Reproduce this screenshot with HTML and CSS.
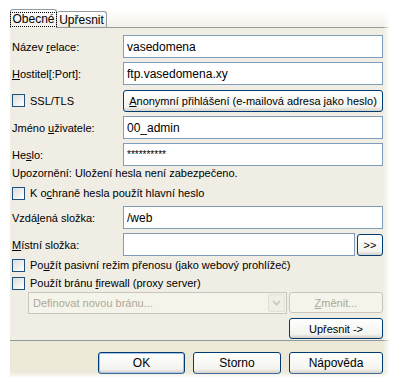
FILE: index.html
```html
<!DOCTYPE html>
<html lang="cs">
<head>
    <meta charset="UTF-8">
    <meta name="viewport" content="width=device-width, initial-scale=1.0">
    <title>Nastavení relace</title>
    <link rel="stylesheet" href="styles.css">
</head>
<body>

<div class="dialog">
    <div class="tabs">
        <div class="tab active"><span class="focus">Obecné</span></div>
        <div class="tab second">Upřesnit</div>
    </div>

    <div class="panel">
        <div class="row first">
            <label class="lbl" for="relace">Název <u>r</u>elace:</label>
            <input class="field" type="text" id="relace" value="vasedomena">
        </div>
        <div class="row">
            <label class="lbl" for="host"><u>H</u>ostitel[:Port]:</label>
            <input class="field" type="text" id="host" value="ftp.vasedomena.xy">
        </div>
        <div class="row">
            <div class="lbl check"><span class="box"></span><span>SSL/TLS</span></div>
            <button class="btn wide"><u>A</u>nonymní přihlášení (e-mailová adresa jako heslo)</button>
        </div>
        <div class="row">
            <label class="lbl" for="user">Jméno <u>u</u>živatele:</label>
            <input class="field" type="text" id="user" value="00_admin">
        </div>
        <div class="row">
            <label class="lbl" for="pass">He<u>s</u>lo:</label>
            <input class="field pass" type="text" id="pass" value="**********">
        </div>
        <div class="note">Upozornění: Uložení hesla není zabezpečeno.</div>
        <div class="check master"><span class="box"></span><span>K o<u>c</u>hraně hesla použít hlavní heslo</span></div>
        <div class="row">
            <label class="lbl" for="remote">Vzdá<u>l</u>ená složka:</label>
            <input class="field" type="text" id="remote" value="/web">
        </div>
        <div class="row">
            <label class="lbl" for="local"><u>M</u>ístní složka:</label>
            <input class="field" type="text" id="local" value="">
            <button class="btn small">&gt;&gt;</button>
        </div>
        <div class="check"><span class="box"></span><span>Po<u>u</u>žít pasivní režim přenosu (jako webový prohlížeč)</span></div>
        <div class="check"><span class="box"></span><span>Použít bránu <u>f</u>irewall (proxy server)</span></div>
        <div class="gateway">
            <div class="combo">
                <span class="combo-text">Definovat novou bránu...</span>
                <span class="combo-arrow">
                    <svg width="9" height="6" viewBox="0 0 9 6"><path d="M1 1 L4.5 4.5 L8 1" fill="none" stroke="#C7C5B8" stroke-width="1.6"/></svg>
                </span>
            </div>
            <button class="btn side" disabled><u>Z</u>měnit...</button>
        </div>
        <div class="more">
            <button class="btn side">Upřesnit -&gt;</button>
        </div>
    </div>

    <div class="footer">
        <button class="btn ok default">OK</button>
        <button class="btn storno">Storno</button>
        <button class="btn help">Nápověda</button>
    </div>
</div>

</body>
</html>
```

FILE: styles.css
```css
body {
    margin: 0;
    padding: 0;
    background-color: white;
    font-family: "Liberation Sans", Arial, sans-serif;
    font-size: 11px;
    color: black;
}
.dialog {
    position: relative;
    width: 380px;
    margin: 9px 0 0 10px;
}
/* fade at the right and bottom edge of the picture */
.dialog::after {
    content: "";
    position: absolute;
    top: 0;
    right: 0;
    bottom: 0;
    width: 7px;
    background: linear-gradient(to right, rgba(255,255,255,0), white);
}
.dialog::before {
    content: "";
    position: absolute;
    left: 0;
    right: 0;
    bottom: 0;
    height: 6px;
    background: linear-gradient(rgba(255,255,255,0), white);
    z-index: 2;
}
.tabs {
    display: flex;
    align-items: flex-end;
    height: 18px;
    background: linear-gradient(white, #F3F1E9);
    font-size: 12px;
}
.tab {
    box-sizing: border-box;
    height: 16px;
    border: 1px solid #919B9C;
    border-bottom: none;
    border-radius: 3px 3px 0 0;
    background: linear-gradient(white, #ECEBE6);
    display: flex;
    align-items: center;
    justify-content: center;
}
.tab.active {
    width: 47px;
    height: 19px;
    margin-bottom: -1px;
    background: linear-gradient(#FCFCFE, #F1EFE7);
    position: relative;
    z-index: 1;
}
.tab.second {
    width: 50px;
    border-left: none;
}
.focus {
    border: 1px dotted black;
    padding: 0 1px;
    line-height: 13px;
}
.panel {
    background: #EFEDE4;
    border-top: 1px solid #919B9C;
    border-bottom: 1px solid #919B9C;
    padding: 7px 7px 1px 2px;
}
.row {
    display: flex;
    align-items: center;
    height: 23px;
    margin-top: 4px;
}
.row.first {
    margin-top: 0;
}
.lbl {
    width: 111px;
    flex: none;
}
.field {
    flex: 1;
    min-width: 0;
    height: 23px;
    box-sizing: border-box;
    margin: 0;
    padding: 0 3px;
    border: 1px solid #7F9DB9;
    background: white;
    font-family: inherit;
    font-size: 12px;
    color: black;
    outline: none;
}
.field.pass {
    font-size: 10px;
}
.check {
    display: flex;
    align-items: center;
    height: 18px;
}
.check.master {
    margin-top: 3px;
}
.box {
    width: 13px;
    height: 13px;
    box-sizing: border-box;
    border: 1px solid #1C5180;
    background: linear-gradient(135deg, #DCDCD7, white);
    margin-right: 5px;
    flex: none;
}
.note {
    height: 15px;
    line-height: 15px;
}
.btn {
    height: 22px;
    box-sizing: border-box;
    margin: 0;
    padding: 0;
    border: 1px solid #003C74;
    border-radius: 3px;
    background: linear-gradient(white, #F3F3EF 80%, #D6D0C5);
    font-family: inherit;
    font-size: 11px;
    color: black;
    white-space: nowrap;
}
.btn.wide {
    flex: 1;
}
.btn.small {
    width: 26px;
    margin-left: 2px;
}
.btn.side {
    width: 94px;
    height: 21px;
}
.btn:disabled {
    border-color: #C9C7BA;
    background: #F5F4EA;
    color: #ACA899;
}
.gateway {
    display: flex;
    height: 22px;
    padding-left: 16px;
}
.combo {
    width: 259px;
    box-sizing: border-box;
    border: 1px solid #C9C7BA;
    background: #F5F4EA;
    display: flex;
    align-items: center;
    margin-right: 2px;
}
.combo-text {
    flex: 1;
    padding-left: 4px;
    color: #ACA899;
}
.combo-arrow {
    width: 17px;
    height: 18px;
    margin-right: 1px;
    box-sizing: border-box;
    border: 1px solid #E3E1D6;
    border-radius: 2px;
    background: #F1EFE5;
    display: flex;
    align-items: center;
    justify-content: center;
}
.more {
    display: flex;
    justify-content: flex-end;
    margin-top: 4px;
}
.footer {
    background: #ECE9D8;
    height: 37px;
    box-sizing: border-box;
    padding: 11px 7px 0 0;
    display: flex;
    justify-content: flex-end;
    gap: 8px;
}
.footer .btn {
    height: 22px;
    font-size: 12px;
}
.ok {
    width: 87px;
}
.storno {
    width: 88px;
}
.help {
    width: 94px;
}
.default {
    box-shadow: inset 0 0 0 1px #A8C0EA;
}
```
